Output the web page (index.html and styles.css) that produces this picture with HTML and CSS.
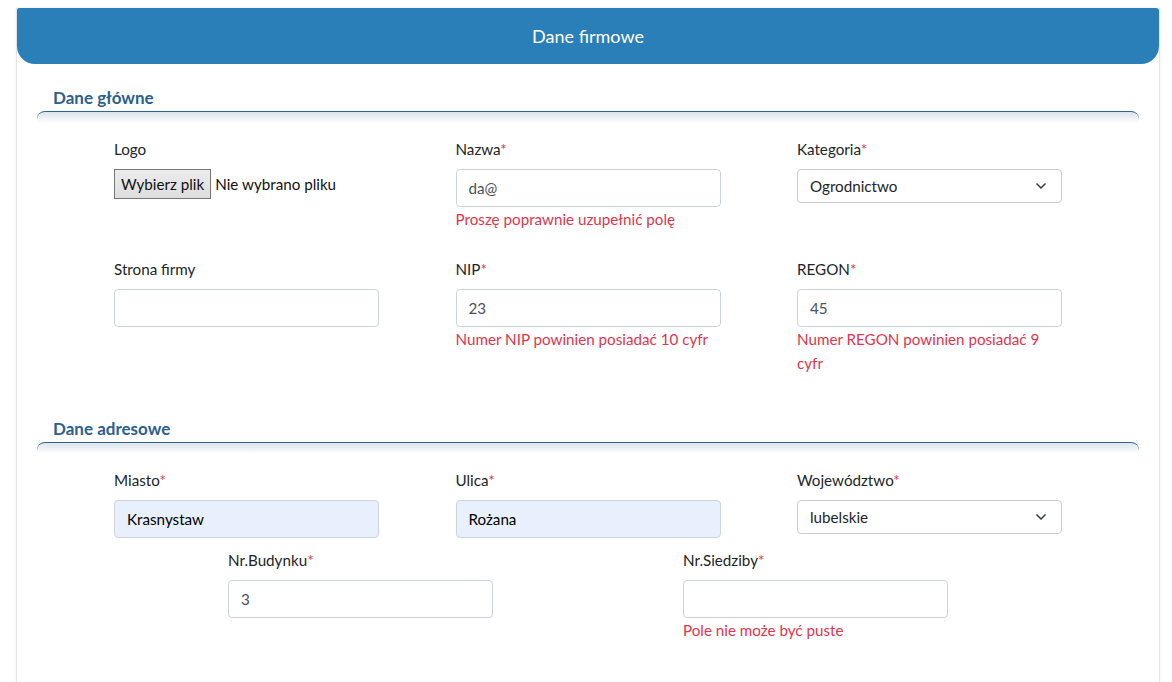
FILE: index.html
```html
<!DOCTYPE html>
<html lang="pl">
<head>
<meta charset="utf-8">
<title>Dane firmowe</title>
<link rel="stylesheet" href="styles.css">
</head>
<body>
<div class="page">
  <div class="card">
    <div class="card-header">Dane firmowe</div>

    <section class="section section-first">
      <h2 class="section-title">Dane główne</h2>
      <div class="section-rule"></div>
      <div class="grid3">
        <div class="field">
          <label class="label">Logo</label>
          <div class="file">
            <span class="file-btn">Wybierz plik</span>
            <span class="file-name">Nie wybrano pliku</span>
          </div>
        </div>
        <div class="field">
          <label class="label">Nazwa<span class="req">*</span></label>
          <input class="input" type="text" value="da@">
          <div class="error">Proszę poprawnie uzupełnić polę</div>
        </div>
        <div class="field">
          <label class="label">Kategoria<span class="req">*</span></label>
          <div class="select">
            <span class="select-value">Ogrodnictwo</span>
            <svg class="chevron" width="12" height="8" viewBox="0 0 12 8"><path d="M1.5 1.5 L6 6 L10.5 1.5" fill="none" stroke="#343a40" stroke-width="1.5"/></svg>
          </div>
        </div>

        <div class="field">
          <label class="label">Strona firmy</label>
          <input class="input" type="text" value="">
        </div>
        <div class="field">
          <label class="label">NIP<span class="req">*</span></label>
          <input class="input" type="text" value="23">
          <div class="error">Numer NIP powinien posiadać 10 cyfr</div>
        </div>
        <div class="field">
          <label class="label">REGON<span class="req">*</span></label>
          <input class="input" type="text" value="45">
          <div class="error">Numer REGON powinien posiadać 9 cyfr</div>
        </div>
      </div>
    </section>

    <section class="section">
      <h2 class="section-title">Dane adresowe</h2>
      <div class="section-rule"></div>
      <div class="grid3">
        <div class="field">
          <label class="label">Miasto<span class="req">*</span></label>
          <input class="input input-filled" type="text" value="Krasnystaw">
        </div>
        <div class="field">
          <label class="label">Ulica<span class="req">*</span></label>
          <input class="input input-filled" type="text" value="Rożana">
        </div>
        <div class="field">
          <label class="label">Województwo<span class="req">*</span></label>
          <div class="select">
            <span class="select-value">lubelskie</span>
            <svg class="chevron" width="12" height="8" viewBox="0 0 12 8"><path d="M1.5 1.5 L6 6 L10.5 1.5" fill="none" stroke="#343a40" stroke-width="1.5"/></svg>
          </div>
        </div>
      </div>
      <div class="grid2">
        <div class="field">
          <label class="label">Nr.Budynku<span class="req">*</span></label>
          <input class="input" type="text" value="3">
        </div>
        <div class="field">
          <label class="label">Nr.Siedziby<span class="req">*</span></label>
          <input class="input" type="text" value="">
          <div class="error">Pole nie może być puste</div>
        </div>
      </div>
    </section>
  </div>
</div>
</body>
</html>
```

FILE: styles.css
```css
* { box-sizing: border-box; }

html, body {
  margin: 0;
  padding: 0;
  background: #ffffff;
}

body {
  font-family: Lato, "Open Sans", "Liberation Sans", sans-serif;
  font-size: 15.2px;
  color: #212529;
}

.page {
  padding: 8px 12px 0 16px;
}

.card {
  background: #fff;
  border-left: 1px solid #e4e4e4;
  border-right: 1px solid #e4e4e4;
  box-shadow: 0 0 3px rgba(0, 0, 0, 0.08);
  min-height: 700px;
}

.card-header {
  height: 56px;
  background: #2a7fb8;
  color: #fff;
  font-size: 18px;
  display: flex;
  align-items: center;
  justify-content: center;
  border-radius: 2px 3px 18px 18px;
}

.section {
  margin: 0 20px;
  padding-top: 15px;
}

.section-first {
  padding-top: 22px;
}

.section-title {
  margin: 0;
  padding-left: 16px;
  font-size: 17px;
  line-height: 24px;
  font-weight: 700;
  color: #2c5f8e;
  height: 25px;
}

.section-rule {
  height: 12px;
  border-top: 1.5px solid #2b6495;
  border-radius: 8px 8px 0 0;
  background: linear-gradient(to bottom, rgba(60, 100, 140, 0.18), rgba(255, 255, 255, 0));
  margin-bottom: 15px;
}

.grid3 {
  display: grid;
  grid-template-columns: repeat(3, 341.5px);
  padding-left: 77px;
}

.grid2 {
  display: grid;
  grid-template-columns: repeat(2, 455px);
  padding-left: 191px;
}

.field {
  display: flex;
  flex-direction: column;
  align-items: flex-start;
  padding-bottom: 11px;
}

.label {
  line-height: 24px;
  font-size: 15.2px;
  margin-top: -1px;
  margin-bottom: 8px;
  color: #212529;
}

.req {
  color: #e3344c;
}

.input {
  width: 265px;
  height: 38px;
  border: 1px solid #ced4da;
  border-radius: 4px;
  padding: 0 12px;
  font-family: inherit;
  font-size: 15.2px;
  color: #495057;
  background: #fff;
  outline: none;
}

.input-filled {
  background: #e8f0fe;
  color: #000;
}

.select {
  position: relative;
  width: 265px;
  height: 34px;
  border: 1px solid #cccccc;
  border-radius: 4px;
  display: flex;
  align-items: center;
  padding: 0 12px;
  background: #fff;
}

.select-value {
  font-size: 15.2px;
  color: #212529;
}

.chevron {
  position: absolute;
  right: 14px;
  top: 12px;
}

.error {
  color: #e3344c;
  font-size: 15.2px;
  line-height: 24px;
  margin-top: 0;
  margin-bottom: 16px;
  width: 265px;
}

.file {
  display: flex;
  align-items: center;
  height: 30px;
}

.file-btn {
  height: 30px;
  display: flex;
  align-items: center;
  padding: 0 6px;
  border: 1px solid #767676;
  background: linear-gradient(#ececec, #dedede);
  font-size: 15.2px;
  color: #111;
}

.file-name {
  margin-left: 4px;
  font-size: 15.2px;
  color: #111;
}
```
